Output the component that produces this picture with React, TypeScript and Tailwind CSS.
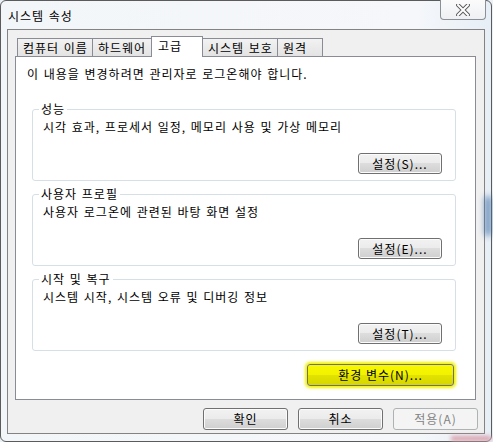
import React from 'react';

const btn =
  'flex items-center justify-center h-[21px] rounded-[3px] border border-[#707070] shadow-[inset_0_0_0_1px_#fbfbfb] bg-[linear-gradient(to_bottom,#f2f2f2_0%,#ebebeb_50%,#dddddd_50%,#cfcfcf_100%)] leading-[14px] text-black';

function GroupBox({ label, text, button }: { label: string; text: string; button: string }) {
  return (
    <div className="relative ml-[16px] mr-[19px] h-[72px] rounded-[3px] border border-[#d5dfe5] flex flex-col pl-[10px] pt-[10px] pr-[13px]">
      <span className="absolute left-[6px] top-[-8px] bg-white px-[2px] leading-[14px]">{label}</span>
      <div className="leading-[14px]">{text}</div>
      <div className="flex justify-end mt-[19px]">
        <button className={`${btn} w-[84px]`}>{button}</button>
      </div>
    </div>
  );
}

export default function App() {
  const tabs = [
    { label: '컴퓨터 이름', w: 'w-[76px]' },
    { label: '하드웨어', w: 'w-[60px]' },
    { label: '고급', w: 'w-[52px]', active: true },
    { label: '시스템 보호', w: 'w-[76px]' },
    { label: '원격', w: 'w-[46px]' },
  ];

  return (
    <div className='w-[493px] h-[442px] overflow-hidden bg-[#e9f0f6] font-["Noto_Sans_CJK_KR",sans-serif] text-[12px] tracking-[1px] [word-spacing:1px] text-black'>
      {/* window frame */}
      <div className="relative w-[492px] h-[442px] rounded-[6px] border border-[#5b5b5b] bg-[linear-gradient(to_right,#f3f6f9_0%,#f5f7fa_85%,#e6eef6_100%)] flex flex-col">
        {/* glass blobs from the desktop */}
        <div className="absolute right-[0px] top-[195px] w-[6px] h-[40px] rounded-full bg-[#3f6ea8] blur-[3px] opacity-80" />
        <div className="absolute right-[0px] bottom-[0px] w-[40px] h-[5px] bg-[#d9a0ab] blur-[2px]" />

        {/* title bar */}
        <div className="h-[28px] flex items-center pl-[7px] pt-[2px] leading-[14px]">시스템 속성</div>
        <div className="absolute right-[5px] top-[-1px] w-[46px] h-[20px] rounded-b-[4px] border border-[#8b8f96] border-t-0 bg-[linear-gradient(to_bottom,#fbfbfb,#eef0f3)] flex items-center justify-center">
          <svg width="14" height="12" viewBox="0 0 14 12">
            <path d="M2 1 L12 11 M12 1 L2 11" stroke="#5c5c5c" strokeWidth="4" strokeLinecap="square" />
            <path d="M2 1 L12 11 M12 1 L2 11" stroke="#ffffff" strokeWidth="2" strokeLinecap="square" />
          </svg>
        </div>

        {/* client area */}
        <div className="ml-[6px] w-[478px] h-[405px] border border-[#838383] bg-[#f0f0f0] flex flex-col pl-[7px] pt-[6px]">
          {/* tabs */}
          <div className="flex items-end pl-[2px] h-[20px] relative z-10">
            {tabs.map((t, i) =>
              t.active ? (
                <div
                  key={i}
                  className={`${t.w} -ml-px h-[21px] -mb-px border border-b-0 border-[#898c95] bg-white pl-[6px] pt-[2px] leading-[14px]`}
                >
                  {t.label}
                </div>
              ) : (
                <div
                  key={i}
                  className={`${t.w} ${i === 0 ? '' : '-ml-px'} h-[18px] border border-b-0 border-[#898c95] bg-[linear-gradient(to_bottom,#f2f2f2,#e3e3e3)] pl-[5px] pt-[2px] leading-[14px]`}
                >
                  {t.label}
                </div>
              )
            )}
          </div>

          {/* tab panel */}
          <div className="w-[461px] h-[344px] border border-[#898c95] bg-white flex flex-col">
            <div className="mt-[10px] ml-[11px] leading-[14px]">
              이 내용을 변경하려면 관리자로 로그온해야 합니다.
            </div>
            <div className="mt-[28px]">
              <GroupBox label="성능" text="시각 효과, 프로세서 일정, 메모리 사용 및 가상 메모리" button="설정(S)..." />
            </div>
            <div className="mt-[13px]">
              <GroupBox label="사용자 프로필" text="사용자 로그온에 관련된 바탕 화면 설정" button="설정(E)..." />
            </div>
            <div className="mt-[13px]">
              <GroupBox label="시작 및 복구" text="시스템 시작, 시스템 오류 및 디버깅 정보" button="설정(T)..." />
            </div>
            <div className="flex justify-end mt-[13px] mr-[21px]">
              <button className="flex items-center justify-center w-[147px] h-[22px] rounded-[3px] border border-[#707070] shadow-[0_0_3px_2px_#f2f200] bg-[linear-gradient(to_bottom,#f7f700_0%,#f2f200_50%,#e3e300_50%,#d6d600_100%)] leading-[14px]">
                환경 변수(N)...
              </button>
            </div>
          </div>

          {/* dialog buttons */}
          <div className="flex justify-end gap-[10px] mt-[8px] pr-[6px]">
            <button className={`${btn} w-[85px] h-[22px]`}>확인</button>
            <button className={`${btn} w-[85px] h-[22px]`}>취소</button>
            <button className="flex items-center justify-center w-[85px] h-[22px] rounded-[3px] border border-[#adb2b5] bg-[#f4f4f4] leading-[14px] text-[#838383]">
              적용(A)
            </button>
          </div>
        </div>
      </div>
    </div>
  );
}
